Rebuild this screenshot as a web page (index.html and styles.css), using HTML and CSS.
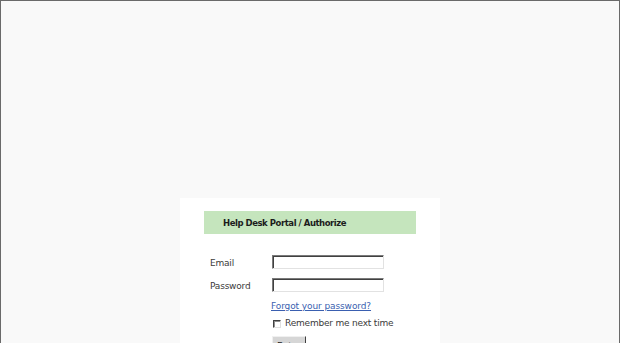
FILE: index.html
```html
<!DOCTYPE html>
<html>
<head>
<meta charset="utf-8">
<title>Help Desk Portal / Authorize</title>
<link rel="stylesheet" href="styles.css">
</head>
<body>
<div class="frame">
  <div class="card">
    <div class="title">Help Desk Portal / Authorize</div>
    <form class="form">
      <div class="row">
        <label class="label">Email</label>
        <input class="field" type="text">
      </div>
      <div class="row">
        <label class="label">Password</label>
        <input class="field" type="password">
      </div>
      <div class="row link-row">
        <a class="link" href="#">Forgot your password?</a>
      </div>
      <div class="row check-row">
        <span class="checkbox"></span>
        <span class="check-label">Remember me next time</span>
      </div>
      <div class="row button-row">
        <button class="btn" type="button">Enter</button>
      </div>
    </form>
  </div>
</div>
</body>
</html>
```
FILE: styles.css
```css
html, body {
  margin: 0;
  padding: 0;
  height: 100%;
  overflow: hidden;
}
body {
  background: #f9f9f9;
  font-family: "DejaVu Sans", Verdana, sans-serif;
  font-size: 9px;
  color: #333;
}
.frame {
  box-sizing: border-box;
  height: 100%;
  border: 1px solid #6a6a6a;
  border-bottom: none;
  padding-top: 197px;
}
.card {
  width: 212px;
  margin: 0 auto;
  background: #fff;
  padding: 13px 24px 20px;
}
.title {
  height: 23px;
  line-height: 24px;
  background: #c5e5bd;
  padding-left: 19px;
  font-weight: bold;
  font-size: 8.5px;
  letter-spacing: -0.45px;
  color: #1c1c1c;
}
.form {
  margin: 21px 0 0 6px;
  display: flex;
  flex-direction: column;
}
.row {
  display: flex;
  align-items: flex-start;
  padding-left: 62px;
}
.row + .row {
  margin-top: 9px;
}
.label {
  width: 62px;
  margin-left: -62px;
  padding-top: 3px;
  line-height: 11px;
  letter-spacing: -0.2px;
  color: #3a3a3a;
}
.field {
  box-sizing: border-box;
  width: 112px;
  height: 14px;
  margin: 0;
  padding: 0;
  background: #fff;
  border: 1px solid;
  border-color: #7a7a7a #e2e2e2 #e2e2e2 #7a7a7a;
  box-shadow: inset 1px 1px 0 #404040;
  outline: none;
}
.link-row {
  margin-top: 9px !important;
  padding-left: 61px;
}
.link {
  line-height: 11px;
  color: #3a5fb0;
  text-decoration: underline;
  letter-spacing: -0.1px;
}
.check-row {
  margin-top: 6px !important;
  align-items: center;
  padding-left: 63px;
  height: 11px;
}
.checkbox {
  box-sizing: border-box;
  width: 8px;
  height: 8px;
  margin-top: 1px;
  background: #fff;
  border: 1px solid;
  border-color: #404040 #e0e0e0 #e0e0e0 #404040;
  box-shadow: inset 1px 1px 0 #909090;
}
.check-label {
  margin-left: 4px;
  line-height: 11px;
  letter-spacing: -0.2px;
  color: #3a3a3a;
}
.button-row {
  margin-top: 7px !important;
}
.btn {
  box-sizing: border-box;
  width: 34px;
  height: 20px;
  margin: 0;
  padding: 0;
  font-family: "DejaVu Sans", Verdana, sans-serif;
  font-size: 9px;
  color: #222;
  background: #d6d6d6;
  border: 1px solid;
  border-color: #f0f0f0 #404040 #404040 #f0f0f0;
}
```
